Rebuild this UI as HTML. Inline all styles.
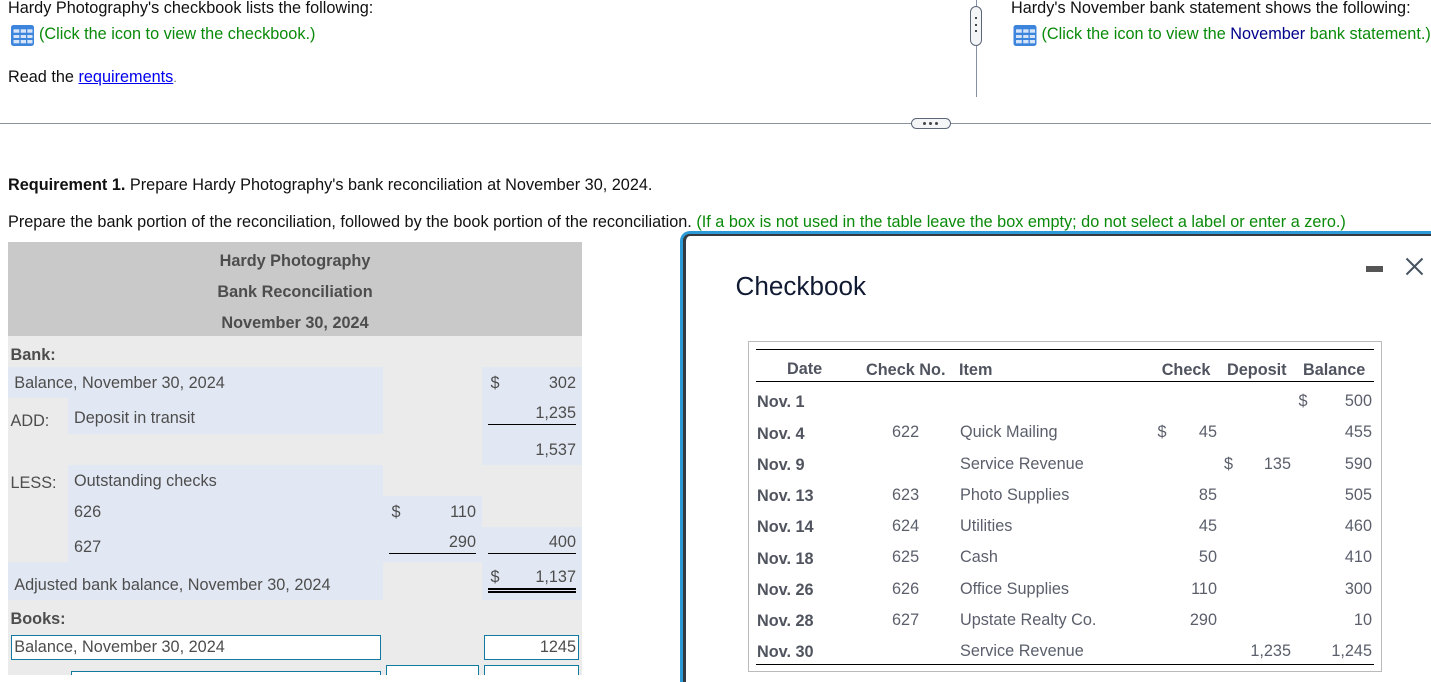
<!DOCTYPE html>
<html><head><meta charset="utf-8">
<style>
html,body{margin:0;padding:0;background:#fff;overflow:hidden;width:1431px;height:682px}
#w{position:relative;width:1431px;height:682px;overflow:hidden;font-family:"Liberation Sans",sans-serif;font-size:16.25px;color:#111}
.t{position:absolute;white-space:nowrap;line-height:20px;height:20px}
.r{text-align:right}
.b{position:absolute}
.g{color:#0a8a0a}
.d{color:#4d4d4d}
.m{color:#5a5f6b}
.mb{color:#50545f;font-weight:bold}
.in{position:absolute;background:#fff;border:1px solid #137a9f;box-sizing:border-box}
svg{position:absolute;display:block}
</style></head><body><div id="w">
<div class="t" style="left:8px;top:0;height:16px;line-height:16px">Hardy Photography's checkbook lists the following:</div>
<svg style="left:11px;top:25px" width="23" height="21" viewBox="0 0 23 21"><rect width="23" height="21" rx="2.5" fill="#3d85dc"/><g fill="#d5e4f9"><rect x="2.500" y="4.300" width="5.800" height="3.400"/><rect x="9.700" y="4.300" width="5.300" height="3.400"/><rect x="16.300" y="4.300" width="5.200" height="3.400"/><rect x="2.500" y="10" width="5.800" height="3"/><rect x="9.700" y="10" width="5.300" height="3"/><rect x="16.300" y="10" width="5.200" height="3"/><rect x="2.500" y="15" width="5.800" height="3.300"/><rect x="9.700" y="15" width="5.300" height="3.300"/><rect x="16.300" y="15" width="5.200" height="3.300"/></g></svg>
<div class="t g" style="left:39px;top:24px">(Click the icon to view the checkbook.)</div>
<div class="t" style="left:8px;top:67px">Read the <a href="#" style="color:#0000ee">requirements</a><span style="font-size:12px;color:#555">.</span></div>

<div class="b" style="left:976px;top:0;width:1px;height:97px;background:#8590a5"></div>
<div class="b" style="left:970px;top:6px;width:12px;height:40px;box-sizing:border-box;border:1px solid #5c6678;border-radius:6px;background:#f4f5f7"></div>
<div class="b" style="left:975px;top:17px;width:2px;height:2px;background:#444"></div>
<div class="b" style="left:975px;top:24px;width:2px;height:2px;background:#444"></div>
<div class="b" style="left:975px;top:30px;width:2px;height:2px;background:#444"></div>
<div class="t" style="left:1011px;top:0;height:16px;line-height:16px">Hardy's November bank statement shows the following:</div>
<svg style="left:1013px;top:25px" width="24" height="21" viewBox="0 0 23 21"><rect width="23" height="21" rx="2.5" fill="#3d85dc"/><g fill="#d5e4f9"><rect x="2.500" y="4.300" width="5.800" height="3.400"/><rect x="9.700" y="4.300" width="5.300" height="3.400"/><rect x="16.300" y="4.300" width="5.200" height="3.400"/><rect x="2.500" y="10" width="5.800" height="3"/><rect x="9.700" y="10" width="5.300" height="3"/><rect x="16.300" y="10" width="5.200" height="3"/><rect x="2.500" y="15" width="5.800" height="3.300"/><rect x="9.700" y="15" width="5.300" height="3.300"/><rect x="16.300" y="15" width="5.200" height="3.300"/></g></svg>
<div class="t g" style="left:1041.500px;top:24px;width:389.500px;overflow:hidden">(Click the icon to view the <span style="color:#00008b">November</span> bank statement.)</div>

<div class="b" style="left:0;top:123px;width:1431px;height:1px;background:#8a929e"></div>
<div class="b" style="left:911px;top:118px;width:40px;height:11px;box-sizing:border-box;border:1px solid #5c6678;border-radius:6px;background:#f4f5f7"></div>
<div class="b" style="left:923px;top:122px;width:3px;height:3px;border-radius:2px;background:#444"></div>
<div class="b" style="left:929px;top:122px;width:3px;height:3px;border-radius:2px;background:#444"></div>
<div class="b" style="left:935px;top:122px;width:3px;height:3px;border-radius:2px;background:#444"></div>

<div class="t" style="left:8px;top:175px"><b>Requirement 1.</b> Prepare Hardy Photography's bank reconciliation at November 30, 2024.</div>
<div class="t" style="left:8px;top:212px">Prepare the bank portion of the reconciliation, followed by the book portion of the reconciliation. <span class="g">(If a box is not used in the table leave the box empty; do not select a label or enter a zero.)</span></div>

<!-- reconciliation table -->
<div class="b" style="left:8px;top:242px;width:574px;height:94px;background:#c9c9c9"></div>
<div class="b" style="left:8px;top:336px;width:574px;height:339px;background:#ebebeb"></div>
<div class="t d" style="left:8px;width:574px;text-align:center;top:251px;font-weight:bold">Hardy Photography</div>
<div class="t d" style="left:8px;width:574px;text-align:center;top:282px;font-weight:bold">Bank Reconciliation</div>
<div class="t d" style="left:8px;width:574px;text-align:center;top:313px;font-weight:bold">November 30, 2024</div>

<div class="b" style="left:8px;top:367px;width:375px;height:31px;background:#e2e8f3"></div>
<div class="b" style="left:68px;top:398px;width:315px;height:36px;background:#e2e8f3"></div>
<div class="b" style="left:482px;top:367px;width:100px;height:98px;background:#e2e8f3"></div>
<div class="b" style="left:68px;top:465px;width:315px;height:97px;background:#e2e8f3"></div>
<div class="b" style="left:383px;top:496px;width:99px;height:66px;background:#e2e8f3"></div>
<div class="b" style="left:482px;top:527px;width:100px;height:35px;background:#e2e8f3"></div>
<div class="b" style="left:8px;top:562px;width:375px;height:38px;background:#e2e8f3"></div>
<div class="b" style="left:482px;top:562px;width:100px;height:38px;background:#e2e8f3"></div>

<div class="t d" style="left:10.500px;top:345px;font-weight:bold">Bank:</div>
<div class="t d" style="left:14.300px;top:373px">Balance, November 30, 2024</div>
<div class="t d" style="left:490.500px;top:373px">$</div>
<div class="t d r" style="left:500px;width:76px;top:373px">302</div>
<div class="t d" style="left:10.500px;top:411px">ADD:</div>
<div class="t d" style="left:74px;top:408px">Deposit in transit</div>
<div class="t d r" style="left:500px;width:76px;top:403px">1,235</div>
<div class="b" style="left:488px;top:424px;width:88px;height:1px;background:#000"></div>
<div class="t d r" style="left:500px;width:76px;top:440px">1,537</div>
<div class="t d" style="left:10.500px;top:473px">LESS:</div>
<div class="t d" style="left:74px;top:471px">Outstanding checks</div>
<div class="t d" style="left:74px;top:502px">626</div>
<div class="t d" style="left:391.500px;top:502px">$</div>
<div class="t d r" style="left:400px;width:76px;top:502px">110</div>
<div class="t d" style="left:74px;top:537px">627</div>
<div class="t d r" style="left:400px;width:76px;top:532px">290</div>
<div class="b" style="left:389px;top:553px;width:87px;height:1px;background:#000"></div>
<div class="t d r" style="left:500px;width:76px;top:532px">400</div>
<div class="b" style="left:488px;top:553px;width:88px;height:1px;background:#000"></div>
<div class="t d" style="left:14.300px;top:575px">Adjusted bank balance, November 30, 2024</div>
<div class="t d" style="left:490.500px;top:567px">$</div>
<div class="t d r" style="left:500px;width:76px;top:567px">1,137</div>
<div class="b" style="left:488px;top:588px;width:88px;height:2px;background:#000"></div>
<div class="b" style="left:488px;top:591px;width:88px;height:2px;background:#000"></div>
<div class="t d" style="left:10.500px;top:609px;font-weight:bold">Books:</div>
<div class="in" style="left:11px;top:635px;width:370px;height:25px"></div>
<div class="t d" style="left:14.300px;top:637px">Balance, November 30, 2024</div>
<div class="in" style="left:484px;top:635px;width:95px;height:25px"></div>
<div class="t d r" style="left:500px;width:76px;top:637px">1245</div>
<div class="in" style="left:71px;top:671px;width:310px;height:4px;border-bottom:0"></div>
<div class="in" style="left:386px;top:665px;width:93px;height:10px;border-bottom:0"></div>
<div class="in" style="left:484px;top:665px;width:95px;height:10px;border-bottom:0"></div>

<!-- modal -->
<div class="b" style="left:680px;top:231px;width:751px;height:451px;box-sizing:border-box;border:3px solid #2b9ad6;border-right:0;border-bottom:0;border-radius:10px 0 0 0;background:#333"></div>
<div class="b" style="left:683px;top:234px;width:748px;height:448px;box-sizing:border-box;border:3px solid #353a40;border-top-width:2px;border-right:0;border-bottom:0;border-radius:7px 0 0 0;background:#fff"></div>
<div class="t" style="left:735.500px;top:271px;height:30px;line-height:30px;font-size:26.100px;color:#101a33">Checkbook</div>
<div class="b" style="left:1366px;top:266px;width:17px;height:6px;background:#555"></div>
<svg style="left:1405px;top:257px" width="19" height="19" viewBox="0 0 19 19"><path d="M1.500 1.500L17.500 17.500M17.500 1.500L1.500 17.500" stroke="#47535f" stroke-width="2" fill="none"/></svg>

<div class="b" style="left:748px;top:341px;width:634px;height:331px;box-sizing:border-box;border:1px solid #bbb"></div>
<div class="b" style="left:756px;top:349px;width:618px;height:1px;background:#000"></div>
<div class="b" style="left:756px;top:381px;width:618px;height:1px;background:#000"></div>
<div class="b" style="left:756px;top:664px;width:618px;height:1px;background:#000"></div>

<div class="t mb" style="left:787px;top:359px">Date</div>
<div class="t mb" style="left:866px;top:360px">Check No.</div>
<div class="t mb" style="left:959px;top:360px">Item</div>
<div class="t mb" style="left:1161.700px;top:360px">Check</div>
<div class="t mb" style="left:1227px;top:360px">Deposit</div>
<div class="t mb" style="left:1303px;top:360px">Balance</div>

<div class="t mb" style="left:757px;top:392px">Nov. 1</div>
<div class="t m" style="left:1298.500px;top:391px">$</div><div class="t m r" style="left:1300px;width:72px;top:391px">500</div>

<div class="t mb" style="left:757px;top:424px">Nov. 4</div>
<div class="t m" style="left:892px;top:422px">622</div><div class="t m" style="left:960px;top:422px">Quick Mailing</div>
<div class="t m" style="left:1157.500px;top:422px">$</div><div class="t m r" style="left:1150px;width:67px;top:422px">45</div>
<div class="t m r" style="left:1300px;width:72px;top:422px">455</div>

<div class="t mb" style="left:757px;top:455px">Nov. 9</div>
<div class="t m" style="left:960px;top:454px">Service Revenue</div>
<div class="t m" style="left:1224px;top:454px">$</div><div class="t m r" style="left:1220px;width:71px;top:454px">135</div>
<div class="t m r" style="left:1300px;width:72px;top:454px">590</div>

<div class="t mb" style="left:757px;top:486px">Nov. 13</div>
<div class="t m" style="left:892px;top:485px">623</div><div class="t m" style="left:960px;top:485px">Photo Supplies</div>
<div class="t m r" style="left:1150px;width:67px;top:485px">85</div>
<div class="t m r" style="left:1300px;width:72px;top:485px">505</div>

<div class="t mb" style="left:757px;top:517px">Nov. 14</div>
<div class="t m" style="left:892px;top:516px">624</div><div class="t m" style="left:960px;top:516px">Utilities</div>
<div class="t m r" style="left:1150px;width:67px;top:516px">45</div>
<div class="t m r" style="left:1300px;width:72px;top:516px">460</div>

<div class="t mb" style="left:757px;top:549px">Nov. 18</div>
<div class="t m" style="left:892px;top:547px">625</div><div class="t m" style="left:960px;top:547px">Cash</div>
<div class="t m r" style="left:1150px;width:67px;top:547px">50</div>
<div class="t m r" style="left:1300px;width:72px;top:547px">410</div>

<div class="t mb" style="left:757px;top:580px">Nov. 26</div>
<div class="t m" style="left:892px;top:579px">626</div><div class="t m" style="left:960px;top:579px">Office Supplies</div>
<div class="t m r" style="left:1150px;width:67px;top:579px">110</div>
<div class="t m r" style="left:1300px;width:72px;top:579px">300</div>

<div class="t mb" style="left:757px;top:611px">Nov. 28</div>
<div class="t m" style="left:892px;top:610px">627</div><div class="t m" style="left:960px;top:610px">Upstate Realty Co.</div>
<div class="t m r" style="left:1150px;width:67px;top:610px">290</div>
<div class="t m r" style="left:1300px;width:72px;top:610px">10</div>

<div class="t mb" style="left:757px;top:642px">Nov. 30</div>
<div class="t m" style="left:960px;top:641px">Service Revenue</div>
<div class="t m r" style="left:1220px;width:71px;top:641px">1,235</div>
<div class="t m r" style="left:1300px;width:72px;top:641px">1,245</div>
</div></body></html>
